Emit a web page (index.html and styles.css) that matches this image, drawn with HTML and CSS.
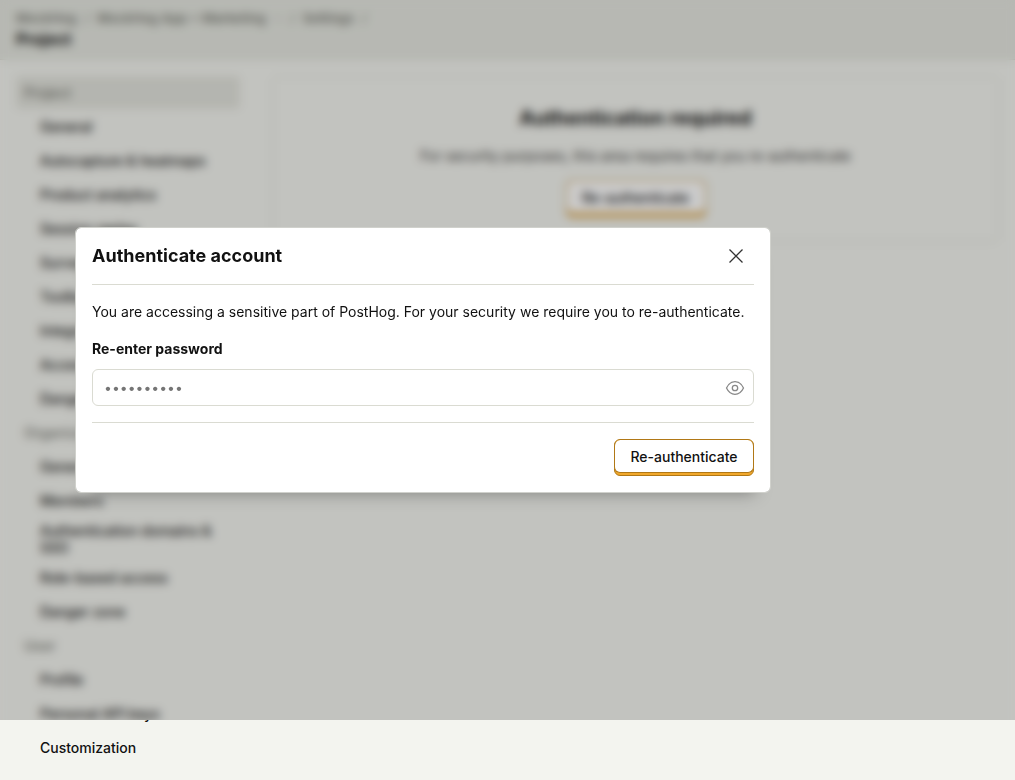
FILE: index.html
```html
<!DOCTYPE html>
<html lang="en">
<head>
<meta charset="utf-8">
<meta name="viewport" content="width=device-width, initial-scale=1">
<title>Settings - Project</title>
<link rel="stylesheet" href="styles.css">
</head>
<body>
<div class="app">
  <header class="topbar">
    <nav class="breadcrumbs" aria-label="Breadcrumbs">
      <a href="#">MockHog</a>
      <span class="separator">/</span>
      <a href="#">MockHog App + Marketing</a>
      <svg class="chevron" viewBox="0 0 8 16" aria-hidden="true"><path d="M1 7l3 3 3-3" fill="none" stroke="currentColor"/></svg>
      <span class="separator">/</span>
      <a href="#">Settings</a>
      <span class="separator">/</span>
    </nav>
    <h1 class="page-title">Project</h1>
  </header>
  <div class="layout">
    <nav class="sidebar" aria-label="Settings">
      <a class="item section active" href="#">Project</a>
      <a class="item" href="#">General</a>
      <a class="item" href="#">Autocapture &amp; heatmaps</a>
      <a class="item" href="#">Product analytics</a>
      <a class="item" href="#">Session replay</a>
      <a class="item" href="#">Surveys</a>
      <a class="item" href="#">Toolbar</a>
      <a class="item" href="#">Integrations</a>
      <a class="item" href="#">Access control</a>
      <a class="item" href="#">Danger zone</a>
      <a class="item section" href="#">Organization</a>
      <a class="item" href="#">General</a>
      <a class="item" href="#">Members</a>
      <a class="item" href="#">Authentication domains &amp; SSO</a>
      <a class="item" href="#">Role-based access</a>
      <a class="item" href="#">Danger zone</a>
      <a class="item section" href="#">User</a>
      <a class="item" href="#">Profile</a>
      <a class="item" href="#">Personal API keys</a>
      <a class="item" href="#">Customization</a>
    </nav>
    <main class="content">
      <section class="card">
        <h2 class="card-title">Authentication required</h2>
        <p class="card-text">For security purposes, this area requires that you re-authenticate</p>
        <button class="button" type="button"><span class="button-face">Re-authenticate</span></button>
      </section>
    </main>
  </div>
  <div class="backdrop"></div>
  <div class="overlay">
    <form class="modal" role="dialog" aria-modal="true" aria-labelledby="modal-title">
      <div class="modal-header">
        <h3 class="modal-title" id="modal-title">Authenticate account</h3>
        <button class="close" type="button" aria-label="Close">
          <svg class="icon" viewBox="0 0 20 20" aria-hidden="true"><path d="M3.500 3.500l13 13M16.500 3.500l-13 13" fill="none" stroke="currentColor" stroke-width="1.300"/></svg>
        </button>
      </div>
      <div class="modal-body">
        <p class="modal-text">You are accessing a sensitive part of PostHog. For your security we require you to re-authenticate.</p>
        <label class="label" for="password">Re-enter password</label>
        <div class="field">
          <input class="input" id="password" type="password" placeholder="••••••••••" autocomplete="current-password">
          <button class="reveal" type="button" aria-label="Show password">
            <svg class="icon" viewBox="0 0 20 20" aria-hidden="true"><path d="M1.500 10C3.500 5.800 6.500 3.700 10 3.700s6.500 2.100 8.500 6.300c-2 4.200-5 6.300-8.500 6.300S3.500 14.200 1.500 10z" fill="none" stroke="currentColor" stroke-width="1.300" stroke-linejoin="round"/><circle cx="10" cy="10" r="2.700" fill="none" stroke="currentColor" stroke-width="1.300"/></svg>
          </button>
        </div>
      </div>
      <div class="modal-footer">
        <button class="button" type="submit"><span class="button-face">Re-authenticate</span></button>
      </div>
    </form>
  </div>
</div>
</body>
</html>
```
FILE: styles.css
```css
* {
  box-sizing: border-box;
}

body {
  margin: 0;
  background: #f3f4ef;
  color: #111;
  font-family: Inter, "Liberation Sans", sans-serif;
  font-size: 14px;
  line-height: 20px;
}

h1, h2, h3, p {
  margin: 0;
}

a {
  color: inherit;
  text-decoration: none;
}

button, input {
  font: inherit;
  color: inherit;
}

.app {
  position: relative;
}

.topbar {
  padding: 10px 16px;
  background: #e5e7e0;
  border-bottom: 1px solid #dadbd2;
}

.breadcrumbs {
  display: flex;
  align-items: center;
  gap: 8px;
  font-size: 13px;
  font-weight: 600;
  line-height: 16px;
  color: #777872;
}

.separator {
  font-weight: 400;
}

.chevron {
  width: 8px;
  height: 16px;
}

.page-title {
  padding-top: 3px;
  font-size: 16px;
  font-weight: 700;
  line-height: 20px;
}

.layout {
  display: flex;
  align-items: flex-start;
  gap: 32px;
  padding: 16px;
}

.sidebar {
  display: flex;
  flex: 0 0 224px;
  flex-direction: column;
  gap: 1px;
}

.item {
  display: flex;
  align-items: center;
  min-height: 33px;
  padding: 4px 8px 4px 24px;
  border-radius: 4px;
  font-weight: 500;
  line-height: 17px;
}

.section {
  padding-left: 8px;
  color: #777872;
}

.active {
  background: #e2e3dc;
}

.content {
  flex: 1;
}

.card {
  display: flex;
  flex-direction: column;
  align-items: center;
  padding: 24px;
  border: 1px solid #dadbd2;
  border-radius: 6px;
}

.card-title {
  padding: 3px 0 14px;
  font-size: 20px;
  font-weight: 700;
  line-height: 28px;
}

.card-text {
  padding-bottom: 14px;
  color: #333;
}

.button {
  min-width: 140px;
  padding: 0 0 2px;
  border: 1px solid #b17816;
  border-radius: 6px;
  background: #f1a82c;
  font-weight: 500;
  cursor: pointer;
}

.button-face {
  display: block;
  padding: 7px 12px 5px;
  margin: 0 -1px;
  border: solid #b17816;
  border-width: 0 1px 1px;
  border-radius: 6px;
  background: #fff;
}

.backdrop {
  position: absolute;
  inset: 0;
  background: rgba(0, 0, 0, 0.2);
  backdrop-filter: blur(5px);
  mask-image: linear-gradient(#000 calc(100% - 60px), transparent calc(100% - 60px));
}

.overlay {
  position: absolute;
  inset: 0 0 60px;
  display: flex;
  align-items: center;
  justify-content: center;
  padding-right: 169px;
}

.modal {
  width: 100%;
  max-width: 696px;
  padding: 0 16px;
  border: 1px solid #d0d1cc;
  border-radius: 6px;
  background: #fff;
  background-clip: padding-box;
  box-shadow: 0 16px 16px -16px rgba(0, 0, 0, 0.35);
}

.modal-header {
  display: flex;
  align-items: center;
  justify-content: space-between;
  padding: 12px 2px 12px 0;
  border-bottom: 1px solid #dadbd2;
}

.modal-title {
  font-size: 18px;
  font-weight: 700;
  line-height: 28px;
}

.close {
  display: flex;
  padding: 6px;
  border: 0;
  background: none;
  color: #333;
}

.icon {
  width: 20px;
  height: 20px;
}

.modal-body {
  padding: 17px 0 16px;
  border-bottom: 1px solid #dadbd2;
}

.modal-text {
  padding-bottom: 17px;
}

.label {
  display: block;
  padding-bottom: 10px;
  font-weight: 700;
}

.field {
  display: flex;
  align-items: center;
  padding: 0 8px 0 11px;
  border: 1px solid #dadbd2;
  border-radius: 6px;
}

.input {
  flex: 1;
  min-width: 0;
  height: 35px;
  padding: 0;
  border: 0;
  outline: 0;
  background: none;
}

.input::placeholder {
  color: #757575;
}

.reveal {
  display: flex;
  padding: 0;
  border: 0;
  background: none;
  color: #888;
}

.modal-footer {
  display: flex;
  justify-content: flex-end;
  padding: 16px 0;
}
```
